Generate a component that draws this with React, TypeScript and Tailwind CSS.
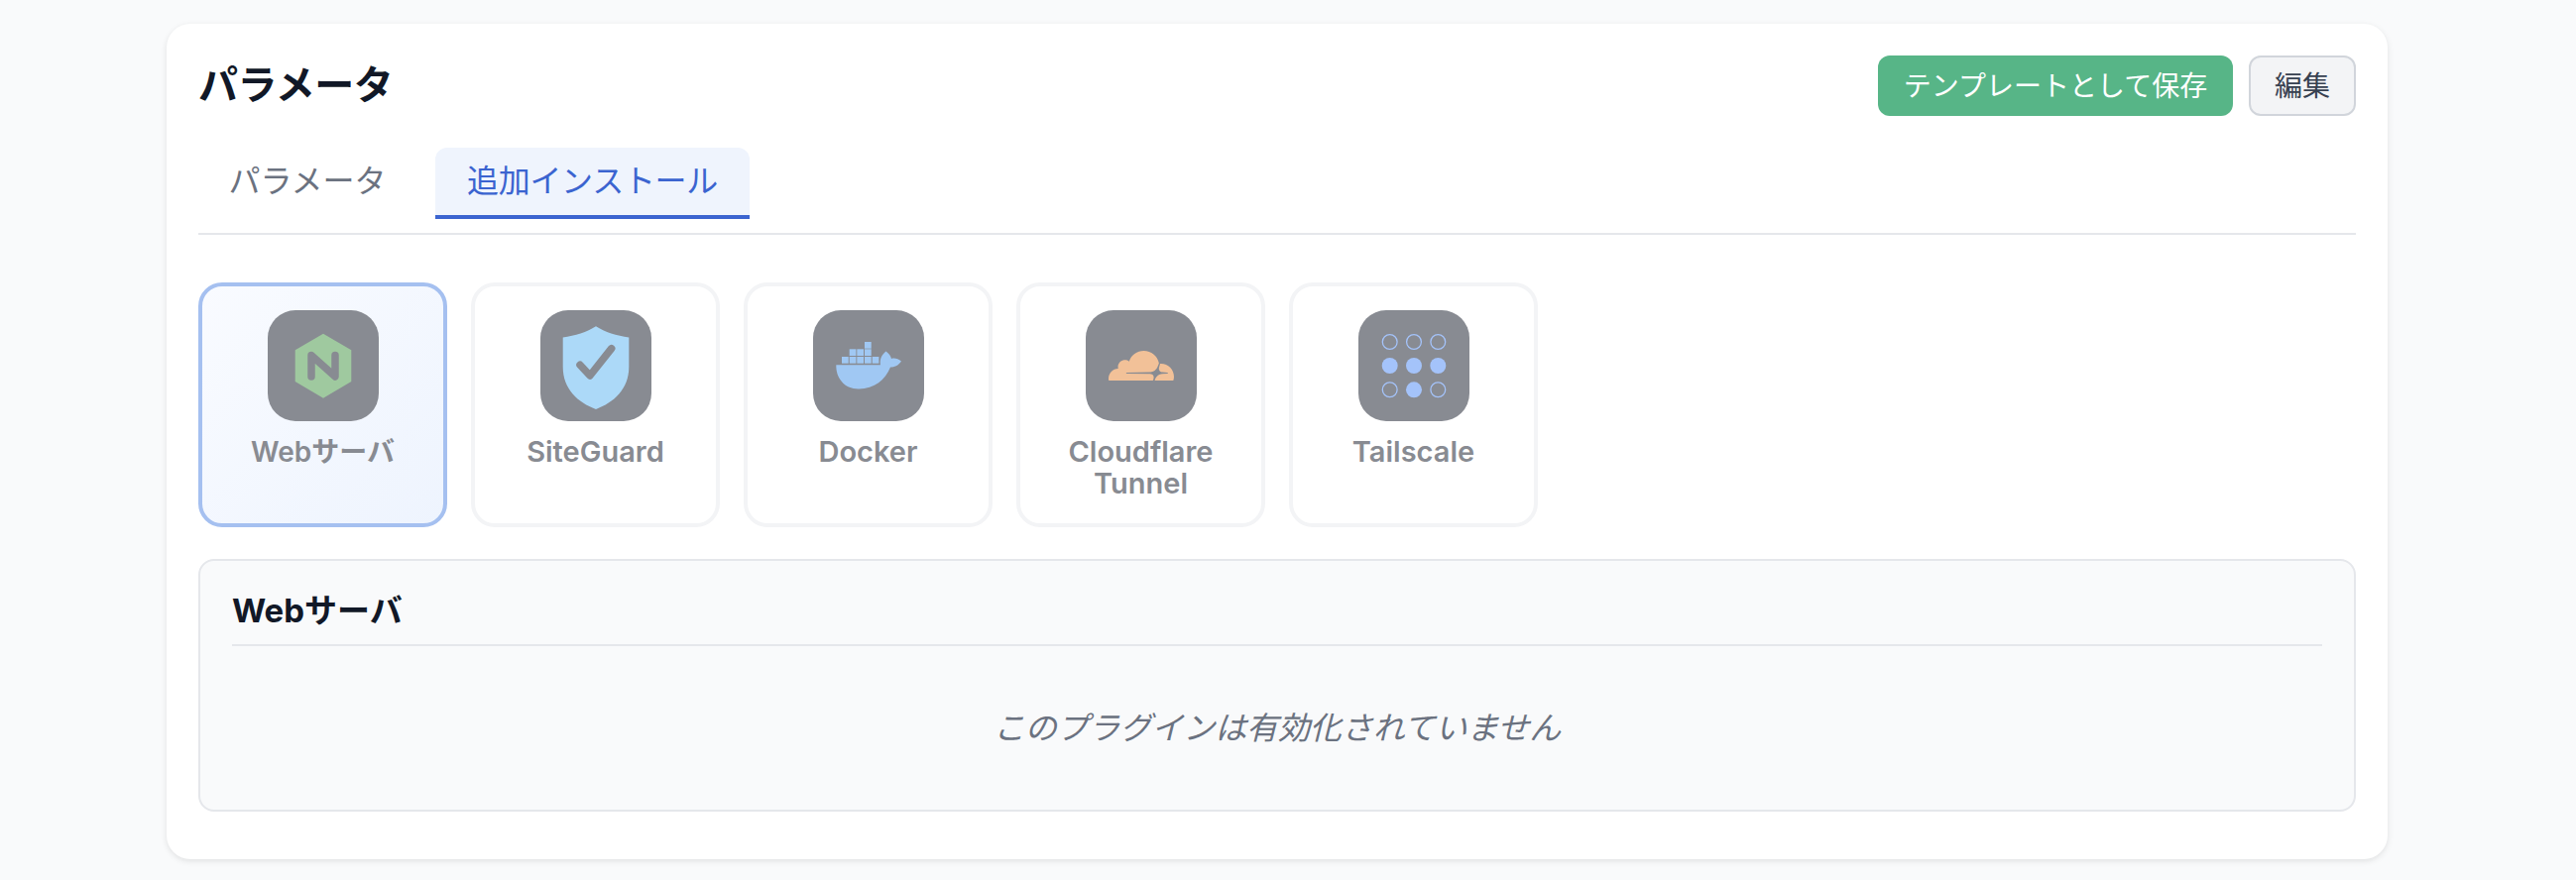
import React from "react";
import { SiCloudflare } from "react-icons/si";

const TILE = "#888b92";

function NginxIcon() {
  return (
    <svg viewBox="0 0 112 112" className="w-full h-full">
      <polygon points="56,23.7 84.3,40.3 84.3,72 56,88.7 27.7,72 27.7,40.3" fill="#9fc99f" />
      <path d="M44 67 V45.5 L68 67 V45.5" fill="none" stroke={TILE} strokeWidth="7.5" strokeLinecap="round" strokeLinejoin="round" />
    </svg>
  );
}

function ShieldIcon() {
  return (
    <svg viewBox="0 0 112 112" className="w-full h-full">
      <path d="M56 16.3 C47 22 35 26 22.7 27.5 V57 C22.7 80 38 93 56 100 C74 93 89.3 80 89.3 57 V27.5 C77 26 65 22 56 16.3Z" fill="#acd9f8" />
      <path d="M40 55.3 L50 66 L71.7 38.7" fill="none" stroke={TILE} strokeWidth="7.5" strokeLinecap="round" strokeLinejoin="round" />
    </svg>
  );
}

function DockerIcon() {
  const boxes = [
    [29, 47], [36.7, 47], [44.3, 47], [52, 47], [59.7, 47],
    [36.7, 39.3], [44.3, 39.3], [52, 39.3],
    [52, 32],
  ];
  return (
    <svg viewBox="0 0 112 112" className="w-full h-full">
      {boxes.map(([x, y], i) => (
        <rect key={i} x={x} y={y} width="6.7" height="6.7" fill="#a0c8f3" />
      ))}
      <path d="M23.3 55.3 H68 C67 50 69 45 73.5 41.5 C76.5 44 78.5 46 79 49 C82 48 86 49 89 51.5 C86 56 82 57.5 78 57.5 C73 70 62 79.5 46 79.5 C31 79.5 23 68 23.3 55.3Z" fill="#a0c8f3" />
    </svg>
  );
}

function CloudflareIcon() {
  return <SiCloudflare className="w-[66px] h-[66px] text-[#f2c198]" />;
}

function TailscaleIcon() {
  const xs = [31.7, 56, 80.3];
  const ys = [32, 56, 80.3];
  const filled = [
    [false, false, false],
    [true, true, true],
    [false, true, false],
  ];
  return (
    <svg viewBox="0 0 112 112" className="w-full h-full">
      {ys.map((y, r) =>
        xs.map((x, c) =>
          filled[r][c] ? (
            <circle key={`${r}${c}`} cx={x} cy={y} r="8" fill="#a4c3fa" />
          ) : (
            <circle key={`${r}${c}`} cx={x} cy={y} r="7.4" fill="none" stroke="#a4c3fa" strokeWidth="1.3" />
          )
        )
      )}
    </svg>
  );
}

function PluginCard({
  label,
  icon,
  active,
}: {
  label: React.ReactNode;
  icon: React.ReactNode;
  active?: boolean;
}) {
  return (
    <div
      className={
        active
          ? "w-[251px] h-[247px] flex flex-col items-center rounded-[24px] border-4 border-[#a5c0f0] bg-linear-to-br from-[#f9fbff] to-[#eef4fe] px-4 pt-6"
          : "w-[251px] h-[247px] flex flex-col items-center rounded-[24px] border-4 border-[#f3f4f6] bg-white px-4 pt-6"
      }
    >
      <div className="w-[112px] h-[112px] rounded-[28px] bg-[#888b92] flex items-center justify-center overflow-hidden">
        {icon}
      </div>
      <div
        className={
          active
            ? "mt-[15px] text-center text-[28px] leading-[32px] font-semibold text-[#888b92]"
            : "mt-[15px] text-center text-[29px] leading-[32px] font-semibold text-[#888b92]"
        }
      >
        {label}
      </div>
    </div>
  );
}

export default function App() {
  return (
    <div className="min-h-screen bg-[#f9fafb] pl-[168px] pt-6 pb-[21px] font-[Inter,'Noto_Sans_CJK_JP',sans-serif]">
      <div className="w-[2240px] rounded-[24px] bg-white shadow-[0_2px_6px_rgba(0,0,0,0.1)] px-8 pt-8 pb-[48px]">
        <div className="flex items-center justify-between">
          <h1 className="text-[40px] leading-[60px] font-bold text-[#111827] tracking-[-0.5px] pb-[1px]">パラメータ</h1>
          <div className="flex items-center gap-4">
            <button className="h-[61px] w-[358px] rounded-[12px] bg-[#57b587] text-white text-[28px]">テンプレートとして保存</button>
            <button className="h-[61px] w-[108px] rounded-[12px] border-2 border-[#d1d5db] bg-[#f3f4f6] text-[#374151] text-[28px]">編集</button>
          </div>
        </div>

        <div className="mt-8 flex gap-[19px] pb-[14px] border-b-2 border-[#e5e7eb]">
          <div className="w-[220px] h-[72px] flex items-center justify-center pb-1 text-[32px] text-[#6b7280]">パラメータ</div>
          <div className="w-[317px] h-[72px] flex items-center justify-center rounded-t-[12px] border-b-4 border-[#3b64d0] bg-[#eff4fd] text-[32px] text-[#3b64d0] tracking-[-0.3px]">追加インストール</div>
        </div>

        <div className="mt-12 flex gap-6">
          <PluginCard active label="Webサーバ" icon={<NginxIcon />} />
          <PluginCard label="SiteGuard" icon={<ShieldIcon />} />
          <PluginCard label="Docker" icon={<DockerIcon />} />
          <PluginCard label={<>Cloudflare<br />Tunnel</>} icon={<CloudflareIcon />} />
          <PluginCard label="Tailscale" icon={<TailscaleIcon />} />
        </div>

        <div className="mt-8 rounded-[16px] border-2 border-[#e5e7eb] bg-[#f9fafb] px-8 pt-[26px] h-[255px]">
          <div className="pb-[10px] border-b-2 border-[#e5e7eb] text-[33px] leading-[48px] font-bold text-[#111827]">Webサーバ</div>
          <div className="mt-[59px] text-center text-[32px] leading-[48px] italic text-[#6b7280] tracking-[-0.1px]">このプラグインは有効化されていません</div>
        </div>
      </div>
    </div>
  );
}
